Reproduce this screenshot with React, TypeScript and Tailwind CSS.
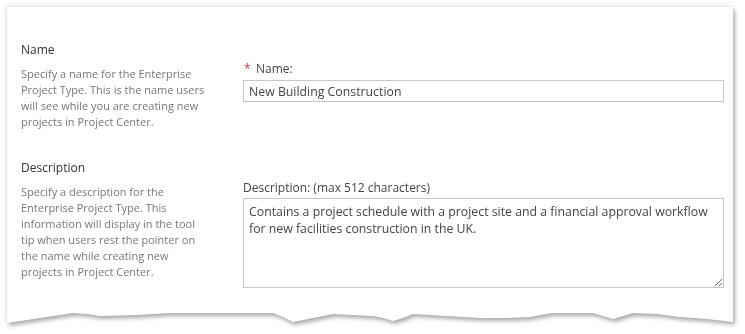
import React from "react";

const nameLines = [
  "Specify a name for the Enterprise",
  "Project Type. This is the name users",
  "will see while you are creating new",
  "projects in Project Center.",
];
const descLines = [
  "Specify a description for the",
  "Enterprise Project Type. This",
  "information will display in the tool",
  "tip when users rest the pointer on",
  "the name while creating new",
  "projects in Project Center.",
];

function Lines({ lines }: { lines: string[] }) {
  return (
    <div className="mt-[7px] text-[11px] leading-[16px] text-[#777] whitespace-nowrap">
      {lines.map((l) => (
        <div key={l}>{l}</div>
      ))}
    </div>
  );
}

export default function App() {
  return (
    <div className="w-[745px] h-[334px] bg-white overflow-hidden font-['Open_Sans',sans-serif]">
      <div className="pt-[7px] pl-[7px] [filter:drop-shadow(2px_3px_2px_rgba(0,0,0,0.3))_drop-shadow(-1px_-1px_2px_rgba(0,0,0,0.12))]">
        <div className="w-[726px] h-[316px] bg-white pt-[34px] pl-[14px] [clip-path:polygon(0_0,726px_0,726px_315px,700px_312px,673px_310px,650px_307px,626px_306px,616px_309px,606px_312px,596px_309px,586px_306px,545px_306px,534px_308px,523px_310px,500px_311px,473px_311px,440px_309px,406px_307px,396px_311px,386px_314px,376px_311px,366px_309px,326px_307px,306px_311px,286px_315px,276px_310px,266px_306px,223px_306px,163px_306px,130px_308px,93px_309px,80px_307px,66px_306px,33px_311px,0_316px)]">
          <div className="flex">
            <div className="w-[222px]">
              <div className="text-[12px] leading-[18px] text-[#333]">Name</div>
              <Lines lines={nameLines} />
            </div>
            <div className="w-[481px] pt-[19px]">
              <div className="text-[12px] leading-[18px] text-[#444] flex">
                <span className="text-[#d23c3c] w-[13px] text-[12px] pl-[1px]">*</span>
                <span>Name:</span>
              </div>
              <div className="mt-[2px] h-[22px] border border-[#c6c6c6] px-[5px] pt-[2px] text-[12.3px] leading-[18px] text-[#444]">
                New Building Construction
              </div>
            </div>
          </div>
          <div className="flex mt-[29px]">
            <div className="w-[222px]">
              <div className="text-[12px] leading-[18px] text-[#333]">Description</div>
              <Lines lines={descLines} />
            </div>
            <div className="w-[481px] pt-[20px]">
              <div className="text-[12px] leading-[18px] text-[#444]">Description: (max 512 characters)</div>
              <textarea
                className="block mt-[1px] w-[481px] h-[90px] border border-[#c6c6c6] px-[5px] pt-[4px] text-[12.3px] leading-[17px] text-[#444] outline-none resize-y"
                defaultValue="Contains a project schedule with a project site and a financial approval workflow for new facilities construction in the UK."
              />
            </div>
          </div>
        </div>
      </div>
    </div>
  );
}
